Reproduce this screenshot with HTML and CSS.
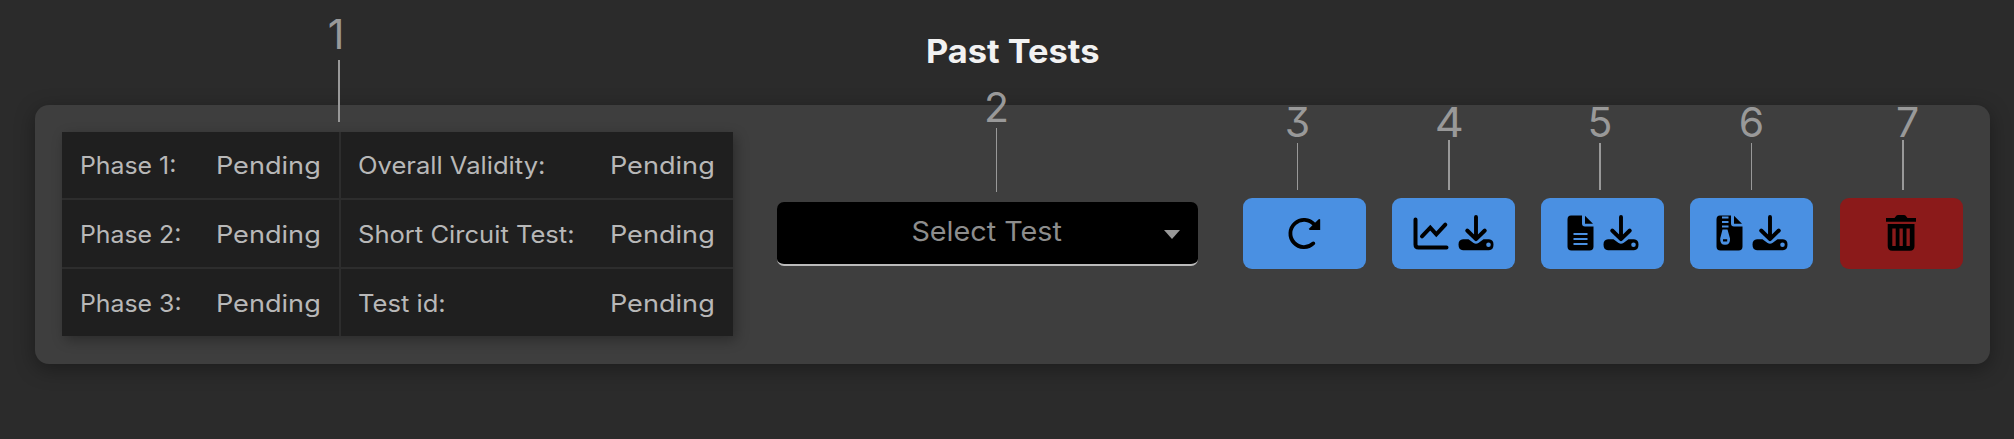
FILE: index.html
```html
<!DOCTYPE html>
<html lang="en">
<head>
<meta charset="utf-8">
<title>Past Tests</title>
<link rel="stylesheet" href="styles.css">
</head>
<body>
<svg class="sprite" aria-hidden="true">
  <symbol id="download" viewBox="0 0 36 36">
    <path d="M18 2V23M9.200 15.500L18 24.200L26.800 15.500" fill="none" stroke="currentColor" stroke-width="3.900" stroke-linecap="round" stroke-linejoin="round"/>
    <path fill-rule="evenodd" fill="currentColor" d="M5 24.300H10.500L15.600 28Q18 29.500 20.400 28L25.500 24.300H31Q35.500 24.800 35.500 29.500Q35.500 35.200 31 35.200H5Q.5 35.200 .5 29.500Q.5 24.800 5 24.300ZM30.500 27.400A2.300 2.300 0 1 0 30.500 32A2.300 2.300 0 1 0 30.500 27.400Z"/>
  </symbol>
</svg>
<main class="page">
  <h1 class="title"><span>Past Tests</span></h1>
  <section class="panel">
    <div class="status">
      <div class="cell"><span class="label phase">Phase 1:</span><span class="value">Pending</span></div>
      <div class="cell"><span class="label">Overall Validity:</span><span class="value">Pending</span></div>
      <div class="cell"><span class="label phase">Phase 2:</span><span class="value">Pending</span></div>
      <div class="cell"><span class="label">Short Circuit Test:</span><span class="value">Pending</span></div>
      <div class="cell"><span class="label phase">Phase 3:</span><span class="value">Pending</span></div>
      <div class="cell"><span class="label">Test id:</span><span class="value">Pending</span></div>
    </div>
    <div class="select" role="combobox"><span class="placeholder">Select Test</span><span class="caret"></span></div>
    <div class="actions">
      <button class="action" aria-label="Refresh">
        <svg class="icon" viewBox="0 0 36 36"><path d="M27.300 28.400A13.600 13.600 0 1 1 28.300 9.600" fill="none" stroke="currentColor" stroke-width="3.800" stroke-linecap="round"/><path d="M34.200 4.600V15.100H24Q22.300 14.600 23.400 13.200L32.400 4.400Q33.500 3.600 34.200 4.600Z" fill="currentColor"/></svg>
      </button>
      <button class="action" aria-label="Download chart">
        <svg class="icon" viewBox="0 0 36 36"><path d="M2.500 4.500V29.500Q2.500 32.500 5.500 32.500H33.500M9 21.300L17.300 12.700L23.300 19.300L32.300 9.700" fill="none" stroke="currentColor" stroke-width="4" stroke-linecap="round" stroke-linejoin="miter"/></svg>
        <svg class="icon"><use href="#download"/></svg>
      </button>
      <button class="action" aria-label="Download report">
        <svg class="icon file" viewBox="0 0 27 36"><path fill="currentColor" d="M4 .5H15V8.500Q15 11.500 18 11.500H26.500V31.500Q26.500 35.500 22.500 35.500H4.500Q.5 35.500 .5 31.500V4.500Q.5 .5 4 .5ZM18 .8L26 8.800H18Z"/><path d="M6.500 19H20.500M6.500 24H20.500M6.500 29H20.500" stroke="#4a90e2" stroke-width="2"/></svg>
        <svg class="icon"><use href="#download"/></svg>
      </button>
      <button class="action" aria-label="Download archive">
        <svg class="icon file" viewBox="0 0 27 36"><path fill="currentColor" d="M4 .5H15V8.500Q15 11.500 18 11.500H26.500V31.500Q26.500 35.500 22.500 35.500H4.500Q.5 35.500 .5 31.500V4.500Q.5 .5 4 .5ZM18 .8L26 8.800H18Z"/><path d="M6 2.500H12.500M6 7H12.500M6 11.500H12.500" stroke="#4a90e2" stroke-width="2"/><path fill="#4a90e2" fill-rule="evenodd" d="M6.500 14.500H11.500L14 23.500Q14.500 29.800 9 29.800Q3.800 29.800 4.200 23.500ZM7 24.200H11.200V26.400H7Z"/></svg>
        <svg class="icon"><use href="#download"/></svg>
      </button>
      <button class="action danger" aria-label="Delete">
        <svg class="icon trash" viewBox="0 0 32 36"><path fill="currentColor" d="M1 3H9.500L11.500 .5Q12 0 13 0H19Q20 0 20.500 .5L22.500 3H31V6.700H1Z"/><path fill="currentColor" fill-rule="evenodd" d="M2.700 9H29.500V31Q29.500 35.700 25 35.700H7.200Q2.700 35.700 2.700 31ZM7.300 13.500V31H10.700V13.500ZM14.500 13.500V31H17.800V13.500ZM21.500 13.500V31H24.800V13.500Z"/></svg>
      </button>
    </div>
  </section>
</main>
<div class="callout c1"><b>1</b><i></i></div>
<div class="callout c2"><b>2</b><i></i></div>
<div class="callout c3"><b>3</b><i></i></div>
<div class="callout c4"><b>4</b><i></i></div>
<div class="callout c5"><b>5</b><i></i></div>
<div class="callout c6"><b>6</b><i></i></div>
<div class="callout c7"><b>7</b><i></i></div>
</body>
</html>
```
FILE: styles.css
```css
* { box-sizing: border-box; }
body {
  margin: 0;
  height: 439px;
  overflow: hidden;
  background: #2b2b2b;
  color: #b8b8b8;
  font-family: Inter, "Open Sans", sans-serif;
}
.sprite { position: absolute; width: 0; height: 0; }
.page { padding: 0 24px 0 35px; }
.title {
  margin: 0;
  height: 105px;
  padding-top: 32px;
  text-align: center;
  font-size: 32px;
  line-height: 40px;
  font-weight: 700;
  color: #f2f2f2;
}
.title span { display: inline-block; transform: scaleX(1.075); }
.panel {
  height: 258.500px;
  padding: 26.500px 27px 0 26.500px;
  display: flex;
  align-items: flex-start;
  border-radius: 14px;
  background: #3e3e3e;
  box-shadow: 0 5px 20px rgba(0, 0, 0, .35);
}
.status {
  width: 671.500px;
  height: 204.500px;
  display: grid;
  grid-template-columns: 277.500px 1fr;
  grid-template-rows: repeat(3, 1fr);
  gap: 2px;
  background: #2d2d2d;
  box-shadow: 3px 4px 12px rgba(0, 0, 0, .3);
}
.cell {
  padding: 1px 18px 0 17px;
  display: flex;
  align-items: center;
  justify-content: space-between;
  background: #1f1f1f;
  font-size: 24px;
  white-space: nowrap;
}
.label { transform: scaleX(1.065); transform-origin: left; }
.phase { transform: translateX(1px) scaleX(1.035); }
.value { transform: scaleX(1.13); transform-origin: right; }
.select {
  margin: 70px 0 0 43.500px;
  width: 421.500px;
  height: 64px;
  display: flex;
  align-items: center;
  justify-content: center;
  padding-bottom: 3px;
  position: relative;
  border-radius: 7px;
  border-bottom: 2px solid #bbb;
  background: #000;
  color: #8d8d8d;
  font-size: 27px;
}
.placeholder { transform: translateX(-1px) scaleX(1.065); }
.caret {
  position: absolute;
  right: 18px;
  top: 28px;
  border: 8.500px solid transparent;
  border-top: 9px solid #999;
  border-bottom: 0;
}
.actions { margin: 66.500px 0 0 44.500px; display: flex; gap: 26.300px; }
.action {
  width: 123px;
  height: 70.500px;
  padding: 0;
  display: flex;
  align-items: center;
  justify-content: center;
  gap: 9px;
  border: 0;
  border-radius: 9px;
  background: #4a90e2;
  color: #000;
}
.danger { background: #8b1a1a; }
.icon { width: 36px; height: 36px; flex: none; }
.file { width: 27px; }
.trash { width: 32px; }
.callout {
  position: absolute;
  width: 40px;
  display: flex;
  flex-direction: column;
  align-items: center;
}
.callout b {
  font-size: 41px;
  line-height: 50px;
  height: 46px;
  font-weight: 400;
  font-feature-settings: "cv09";
  color: #999;
}
.callout i { width: 1.500px; height: 48px; background: #999; }
.c1 { left: 319px; top: 9px; }
.c1 i { height: 62px; margin-top: 5px; }
.c1 b { margin-right: 6px; }
.c2 { left: 976.500px; top: 82px; }
.c2 i { height: 64px; }
.c3, .c4, .c5, .c6, .c7 { top: 97px; }
.c3 { left: 1277.500px; }
.c4 { left: 1429px; }
.c4 b { transform: scaleX(1.1); }
.c5 { left: 1580px; }
.c6 { left: 1731.500px; }
.c7 { left: 1883px; }
.c3 i, .c5 i, .c6 i { height: 47px; }
.c4 i, .c7 i { height: 50px; margin-top: -3px; }
.c7 b { margin-left: 9px; }
```
